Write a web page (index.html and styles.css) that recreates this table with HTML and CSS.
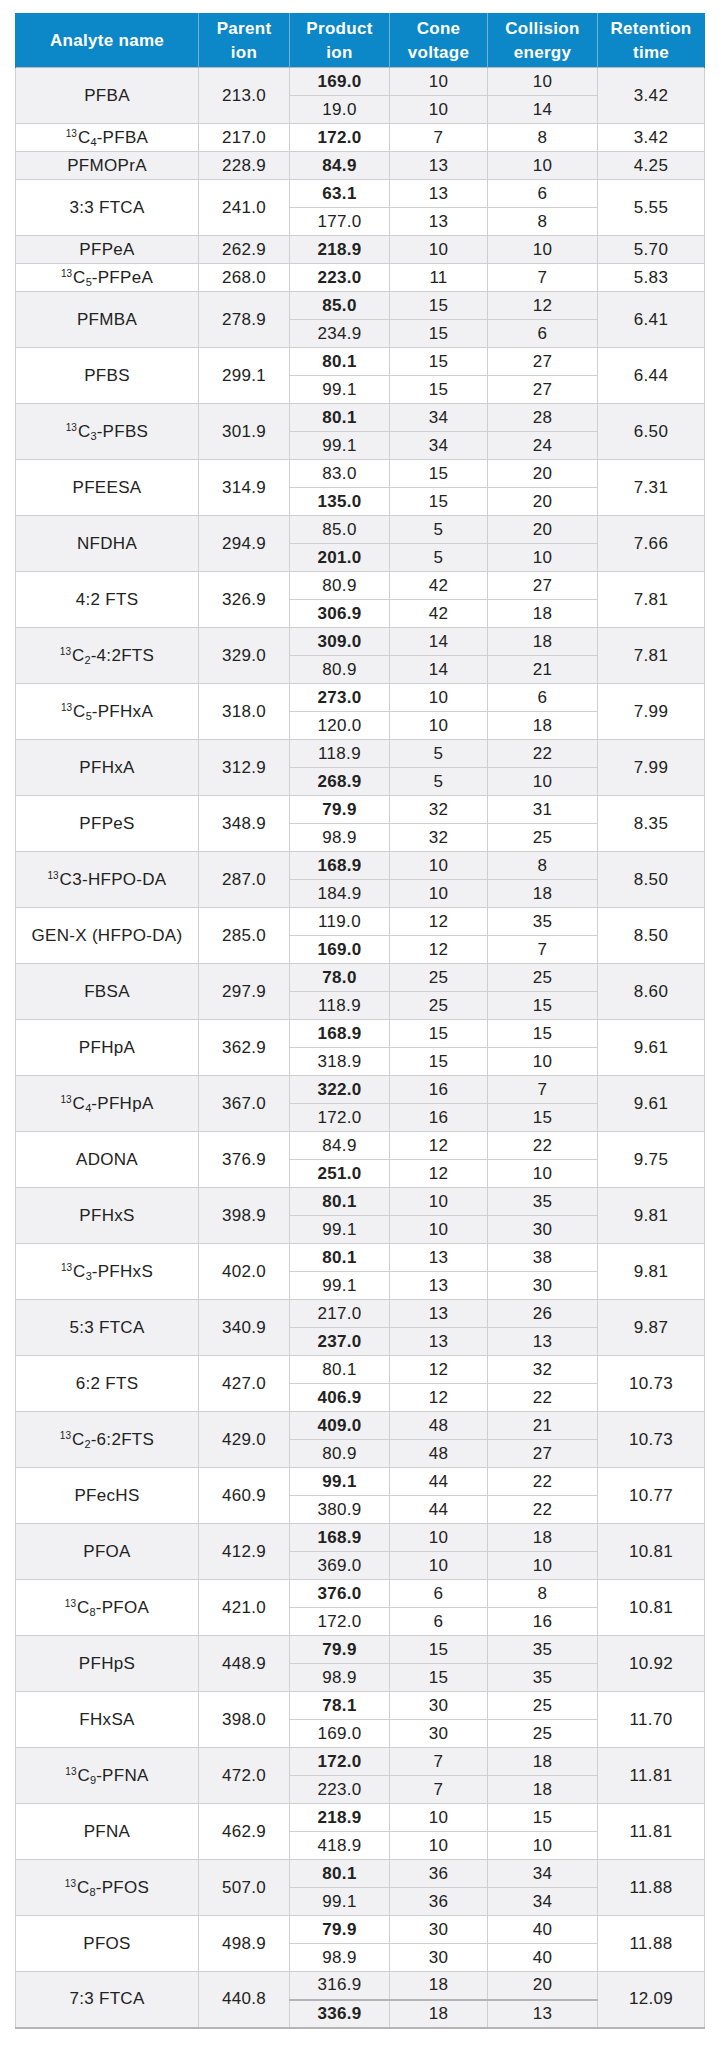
FILE: index.html
```html
<!DOCTYPE html>
<html>
<head>
<meta charset="utf-8">
<link rel="stylesheet" href="styles.css">
</head>
<body>
<div class="page">
<table class="data">
<colgroup>
<col class="c1"><col class="c2"><col class="c3"><col class="c4"><col class="c5"><col class="c6">
</colgroup>
<thead>
<tr><th>Analyte name</th><th>Parent<br>ion</th><th>Product<br>ion</th><th>Cone<br>voltage</th><th>Collision<br>energy</th><th>Retention<br>time</th></tr>
</thead>
<tbody>
<tr class="g first"><td rowspan="2">PFBA</td><td rowspan="2">213.0</td><td class="b">169.0</td><td>10</td><td>10</td><td rowspan="2">3.42</td></tr>
<tr class="g"><td>19.0</td><td>10</td><td>14</td></tr>
<tr class="w first"><td><sup>13</sup>C<sub>4</sub>-PFBA</td><td>217.0</td><td class="b">172.0</td><td>7</td><td>8</td><td>3.42</td></tr>
<tr class="g first"><td>PFMOPrA</td><td>228.9</td><td class="b">84.9</td><td>13</td><td>10</td><td>4.25</td></tr>
<tr class="w first"><td rowspan="2">3:3 FTCA</td><td rowspan="2">241.0</td><td class="b">63.1</td><td>13</td><td>6</td><td rowspan="2">5.55</td></tr>
<tr class="w"><td>177.0</td><td>13</td><td>8</td></tr>
<tr class="g first"><td>PFPeA</td><td>262.9</td><td class="b">218.9</td><td>10</td><td>10</td><td>5.70</td></tr>
<tr class="w first"><td><sup>13</sup>C<sub>5</sub>-PFPeA</td><td>268.0</td><td class="b">223.0</td><td>11</td><td>7</td><td>5.83</td></tr>
<tr class="g first"><td rowspan="2">PFMBA</td><td rowspan="2">278.9</td><td class="b">85.0</td><td>15</td><td>12</td><td rowspan="2">6.41</td></tr>
<tr class="g"><td>234.9</td><td>15</td><td>6</td></tr>
<tr class="w first"><td rowspan="2">PFBS</td><td rowspan="2">299.1</td><td class="b">80.1</td><td>15</td><td>27</td><td rowspan="2">6.44</td></tr>
<tr class="w"><td>99.1</td><td>15</td><td>27</td></tr>
<tr class="g first"><td rowspan="2"><sup>13</sup>C<sub>3</sub>-PFBS</td><td rowspan="2">301.9</td><td class="b">80.1</td><td>34</td><td>28</td><td rowspan="2">6.50</td></tr>
<tr class="g"><td>99.1</td><td>34</td><td>24</td></tr>
<tr class="w first"><td rowspan="2">PFEESA</td><td rowspan="2">314.9</td><td>83.0</td><td>15</td><td>20</td><td rowspan="2">7.31</td></tr>
<tr class="w"><td class="b">135.0</td><td>15</td><td>20</td></tr>
<tr class="g first"><td rowspan="2">NFDHA</td><td rowspan="2">294.9</td><td>85.0</td><td>5</td><td>20</td><td rowspan="2">7.66</td></tr>
<tr class="g"><td class="b">201.0</td><td>5</td><td>10</td></tr>
<tr class="w first"><td rowspan="2">4:2 FTS</td><td rowspan="2">326.9</td><td>80.9</td><td>42</td><td>27</td><td rowspan="2">7.81</td></tr>
<tr class="w"><td class="b">306.9</td><td>42</td><td>18</td></tr>
<tr class="g first"><td rowspan="2"><sup>13</sup>C<sub>2</sub>-4:2FTS</td><td rowspan="2">329.0</td><td class="b">309.0</td><td>14</td><td>18</td><td rowspan="2">7.81</td></tr>
<tr class="g"><td>80.9</td><td>14</td><td>21</td></tr>
<tr class="w first"><td rowspan="2"><sup>13</sup>C<sub>5</sub>-PFHxA</td><td rowspan="2">318.0</td><td class="b">273.0</td><td>10</td><td>6</td><td rowspan="2">7.99</td></tr>
<tr class="w"><td>120.0</td><td>10</td><td>18</td></tr>
<tr class="g first"><td rowspan="2">PFHxA</td><td rowspan="2">312.9</td><td>118.9</td><td>5</td><td>22</td><td rowspan="2">7.99</td></tr>
<tr class="g"><td class="b">268.9</td><td>5</td><td>10</td></tr>
<tr class="w first"><td rowspan="2">PFPeS</td><td rowspan="2">348.9</td><td class="b">79.9</td><td>32</td><td>31</td><td rowspan="2">8.35</td></tr>
<tr class="w"><td>98.9</td><td>32</td><td>25</td></tr>
<tr class="g first"><td rowspan="2"><sup>13</sup>C3-HFPO-DA</td><td rowspan="2">287.0</td><td class="b">168.9</td><td>10</td><td>8</td><td rowspan="2">8.50</td></tr>
<tr class="g"><td>184.9</td><td>10</td><td>18</td></tr>
<tr class="w first"><td rowspan="2">GEN-X (HFPO-DA)</td><td rowspan="2">285.0</td><td>119.0</td><td>12</td><td>35</td><td rowspan="2">8.50</td></tr>
<tr class="w"><td class="b">169.0</td><td>12</td><td>7</td></tr>
<tr class="g first"><td rowspan="2">FBSA</td><td rowspan="2">297.9</td><td class="b">78.0</td><td>25</td><td>25</td><td rowspan="2">8.60</td></tr>
<tr class="g"><td>118.9</td><td>25</td><td>15</td></tr>
<tr class="w first"><td rowspan="2">PFHpA</td><td rowspan="2">362.9</td><td class="b">168.9</td><td>15</td><td>15</td><td rowspan="2">9.61</td></tr>
<tr class="w"><td>318.9</td><td>15</td><td>10</td></tr>
<tr class="g first"><td rowspan="2"><sup>13</sup>C<sub>4</sub>-PFHpA</td><td rowspan="2">367.0</td><td class="b">322.0</td><td>16</td><td>7</td><td rowspan="2">9.61</td></tr>
<tr class="g"><td>172.0</td><td>16</td><td>15</td></tr>
<tr class="w first"><td rowspan="2">ADONA</td><td rowspan="2">376.9</td><td>84.9</td><td>12</td><td>22</td><td rowspan="2">9.75</td></tr>
<tr class="w"><td class="b">251.0</td><td>12</td><td>10</td></tr>
<tr class="g first"><td rowspan="2">PFHxS</td><td rowspan="2">398.9</td><td class="b">80.1</td><td>10</td><td>35</td><td rowspan="2">9.81</td></tr>
<tr class="g"><td>99.1</td><td>10</td><td>30</td></tr>
<tr class="w first"><td rowspan="2"><sup>13</sup>C<sub>3</sub>-PFHxS</td><td rowspan="2">402.0</td><td class="b">80.1</td><td>13</td><td>38</td><td rowspan="2">9.81</td></tr>
<tr class="w"><td>99.1</td><td>13</td><td>30</td></tr>
<tr class="g first"><td rowspan="2">5:3 FTCA</td><td rowspan="2">340.9</td><td>217.0</td><td>13</td><td>26</td><td rowspan="2">9.87</td></tr>
<tr class="g"><td class="b">237.0</td><td>13</td><td>13</td></tr>
<tr class="w first"><td rowspan="2">6:2 FTS</td><td rowspan="2">427.0</td><td>80.1</td><td>12</td><td>32</td><td rowspan="2">10.73</td></tr>
<tr class="w"><td class="b">406.9</td><td>12</td><td>22</td></tr>
<tr class="g first"><td rowspan="2"><sup>13</sup>C<sub>2</sub>-6:2FTS</td><td rowspan="2">429.0</td><td class="b">409.0</td><td>48</td><td>21</td><td rowspan="2">10.73</td></tr>
<tr class="g"><td>80.9</td><td>48</td><td>27</td></tr>
<tr class="w first"><td rowspan="2">PFecHS</td><td rowspan="2">460.9</td><td class="b">99.1</td><td>44</td><td>22</td><td rowspan="2">10.77</td></tr>
<tr class="w"><td>380.9</td><td>44</td><td>22</td></tr>
<tr class="g first"><td rowspan="2">PFOA</td><td rowspan="2">412.9</td><td class="b">168.9</td><td>10</td><td>18</td><td rowspan="2">10.81</td></tr>
<tr class="g"><td>369.0</td><td>10</td><td>10</td></tr>
<tr class="w first"><td rowspan="2"><sup>13</sup>C<sub>8</sub>-PFOA</td><td rowspan="2">421.0</td><td class="b">376.0</td><td>6</td><td>8</td><td rowspan="2">10.81</td></tr>
<tr class="w"><td>172.0</td><td>6</td><td>16</td></tr>
<tr class="g first"><td rowspan="2">PFHpS</td><td rowspan="2">448.9</td><td class="b">79.9</td><td>15</td><td>35</td><td rowspan="2">10.92</td></tr>
<tr class="g"><td>98.9</td><td>15</td><td>35</td></tr>
<tr class="w first"><td rowspan="2">FHxSA</td><td rowspan="2">398.0</td><td class="b">78.1</td><td>30</td><td>25</td><td rowspan="2">11.70</td></tr>
<tr class="w"><td>169.0</td><td>30</td><td>25</td></tr>
<tr class="g first"><td rowspan="2"><sup>13</sup>C<sub>9</sub>-PFNA</td><td rowspan="2">472.0</td><td class="b">172.0</td><td>7</td><td>18</td><td rowspan="2">11.81</td></tr>
<tr class="g"><td>223.0</td><td>7</td><td>18</td></tr>
<tr class="w first"><td rowspan="2">PFNA</td><td rowspan="2">462.9</td><td class="b">218.9</td><td>10</td><td>15</td><td rowspan="2">11.81</td></tr>
<tr class="w"><td>418.9</td><td>10</td><td>10</td></tr>
<tr class="g first"><td rowspan="2"><sup>13</sup>C<sub>8</sub>-PFOS</td><td rowspan="2">507.0</td><td class="b">80.1</td><td>36</td><td>34</td><td rowspan="2">11.88</td></tr>
<tr class="g"><td>99.1</td><td>36</td><td>34</td></tr>
<tr class="w first"><td rowspan="2">PFOS</td><td rowspan="2">498.9</td><td class="b">79.9</td><td>30</td><td>40</td><td rowspan="2">11.88</td></tr>
<tr class="w"><td>98.9</td><td>30</td><td>40</td></tr>
<tr class="g first last"><td rowspan="2">7:3 FTCA</td><td rowspan="2">440.8</td><td>316.9</td><td>18</td><td>20</td><td rowspan="2">12.09</td></tr>
<tr class="g last"><td class="b">336.9</td><td>18</td><td>13</td></tr>
</tbody>
</table>
</div>
</body>
</html>
```

FILE: styles.css
```css
html, body {
  margin: 0;
  padding: 0;
  background: #ffffff;
}

.page {
  padding: 13px 0 0 15px;
}

.data {
  width: 689px;
  table-layout: fixed;
  border-collapse: collapse;
  font-family: "Liberation Sans", Arial, sans-serif;
  font-size: 17px;
  letter-spacing: 0.3px;
  color: #222222;
}

.c1 { width: 183px; }
.c2 { width: 91px; }
.c3 { width: 100px; }
.c4 { width: 98px; }
.c5 { width: 110px; }
.c6 { width: 107px; }

.data th {
  background: #0c87c8;
  color: #ffffff;
  font-weight: bold;
  height: 53px;
  line-height: 24px;
  padding: 0;
  text-align: center;
  vertical-align: middle;
  border-left: 1px solid #6db4dd;
  border-right: 1px solid #6db4dd;
  border-top: 1px solid #0c87c8;
}

.data th:first-child {
  border-left-color: #0c87c8;
}

.data th:last-child {
  border-right-color: #0c87c8;
}

.data tbody tr {
  height: 28px;
}

.data td {
  padding: 0;
  text-align: center;
  vertical-align: middle;
  line-height: 20px;
  border: 1px solid #cfcfd2;
}

.data tr.first td {
  border-top: 1px solid #b9b9bd;
}

.data tr.last td {
  border-bottom: 2px solid #b4b4b8;
}

.data tr.g td {
  background: #f1f1f3;
}

.data tr.w td {
  background: #ffffff;
}

.data td.b {
  font-weight: bold;
}

.data sup {
  font-size: 10px;
  line-height: 0;
  vertical-align: 6px;
  letter-spacing: 0;
  margin-right: 1px;
}

.data sub {
  font-size: 11px;
  line-height: 0;
  vertical-align: -3px;
  letter-spacing: 0;
}
```
